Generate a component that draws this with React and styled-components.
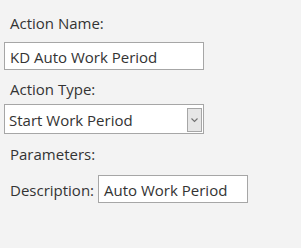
import React from "react";
import styled, { createGlobalStyle } from "styled-components";

const GlobalStyle = createGlobalStyle`
  html, body {
    margin: 0;
    padding: 0;
    background: #f3f3f3;
  }
  body {
    font-family: "Open Sans", "Noto Sans", sans-serif;
    color: #333333;
  }
`;

const Panel = styled.div`
  width: 301px;
  height: 248px;
  box-sizing: border-box;
  padding: 12px 0 0 4px;
  display: flex;
  flex-direction: column;
  align-items: flex-start;
  background: #f3f3f3;
`;

const Label = styled.div`
  font-size: 15px;
  line-height: 22px;
  padding-left: 6px;
  margin-bottom: ${(p) => p.$gap || 0}px;
  color: #333333;
`;

const TextBox = styled.div`
  box-sizing: border-box;
  width: ${(p) => p.$width}px;
  height: 28px;
  display: flex;
  align-items: center;
  padding: 1px 0 0 5px;
  background: #ffffff;
  border: 1px solid #a6a6a6;
  font-size: 15px;
  color: #333333;
  white-space: nowrap;
  margin-bottom: ${(p) => p.$gap || 0}px;
`;

const SelectBox = styled.div`
  box-sizing: border-box;
  width: 200px;
  height: 30px;
  display: flex;
  align-items: center;
  justify-content: space-between;
  padding: 3px 1px 1px 4px;
  background: #ffffff;
  border: 1px solid #a6a6a6;
  font-size: 15px;
  color: #333333;
  margin-bottom: ${(p) => p.$gap || 0}px;
`;

const ArrowButton = styled.div`
  box-sizing: border-box;
  width: 15px;
  height: 24px;
  display: flex;
  align-items: center;
  justify-content: center;
  background: #e6e6e6;
  border: 1px solid #a6a6a6;
`;

const Row = styled.div`
  display: flex;
  align-items: center;
  gap: 4px;
`;

const InlineLabel = styled.span`
  font-size: 15px;
  padding: 2px 0 0 6px;
  color: #333333;
`;

export default function App() {
  return (
    <>
      <GlobalStyle />
      <Panel>
        <Label $gap={8}>Action Name:</Label>
        <TextBox $width={200} $gap={8}>KD Auto Work Period</TextBox>
        <Label $gap={4}>Action Type:</Label>
        <SelectBox $gap={9}>
          <span>Start Work Period</span>
          <ArrowButton>
            <svg width="9" height="6" viewBox="0 0 9 6">
              <path d="M1.5 1.5 L4.5 4.5 L7.5 1.5" fill="none" stroke="#707070" strokeWidth="1.1" />
            </svg>
          </ArrowButton>
        </SelectBox>
        <Label $gap={10}>Parameters:</Label>
        <Row>
          <InlineLabel>Description:</InlineLabel>
          <TextBox $width={150}>Auto Work Period</TextBox>
        </Row>
      </Panel>
    </>
  );
}
